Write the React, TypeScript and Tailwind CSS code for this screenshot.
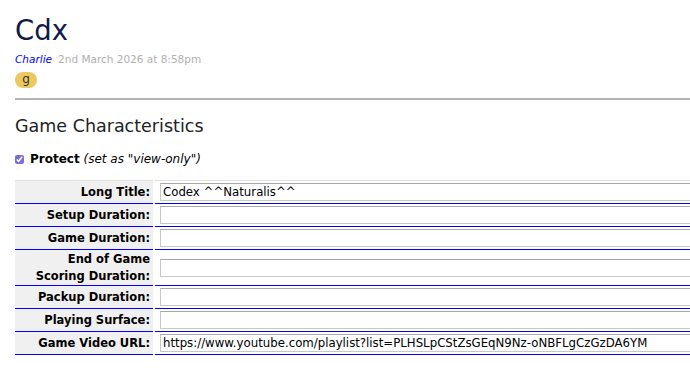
const rows: {label: string[], value: string, tall?: boolean}[] = [
  {label: ["Long Title:"], value: "Codex ^^Naturalis^^"},
  {label: ["Setup Duration:"], value: ""},
  {label: ["Game Duration:"], value: ""},
  {label: ["End of Game", "Scoring Duration:"], value: "", tall: true},
  {label: ["Packup Duration:"], value: ""},
  {label: ["Playing Surface:"], value: ""},
  {label: ["Game Video URL:"], value: "https://www.youtube.com/playlist?list=PLHSLpCStZsGEqN9Nz-oNBFLgCzGzDA6YM"},
]

export default function App() {
  return (
    <div className="w-[690px] h-[376px] overflow-hidden bg-white pl-[15px] pt-[10px] font-['DejaVu_Sans',sans-serif] text-[12px] text-black">
      <h1 className="text-[27.5px] leading-[40px] text-[#101a4a]">Cdx</h1>
      <div className="flex gap-[6px] text-[10.5px] leading-[14px] mt-[2px]">
        <span className="italic text-[#0000ee]">Charlie</span>
        <span className="text-[#b0b0b0]">2nd March 2026 at 8:58pm</span>
      </div>
      <div className="mt-[6px] w-[22px] h-[16px] rounded-full bg-[#ecc95f] flex items-center justify-center text-[12px] leading-none text-[#333] pb-[2px]">g</div>
      <div className="mt-[10px] w-[700px] border-t-2 border-[#b4b4b4]"></div>
      <h2 className="mt-[15px] text-[17.5px] leading-[22px] text-[#222]">Game Characteristics</h2>
      <div className="mt-[14px] flex items-center gap-[6px] leading-[16px]">
        <input type="checkbox" defaultChecked className="w-[9px] h-[9px] m-0 accent-[#7b6fd6]" />
        <span><b>Protect</b> <i>(set as "view-only")</i></span>
      </div>
      <table className="mt-[13px] w-[700px] border-collapse border-t border-[#e0e0e0]">
        <tbody>
          {rows.map((r, i) => (
            <tr key={i} className="border-b border-[#0000ff]">
              <td className={`w-[139px] p-0 bg-[#f0f0f0] text-right font-bold text-[11.5px] pr-[3px] border-r-2 border-white ${r.tall ? "h-[36px] leading-[17px]" : "h-[22px] leading-[16px]"}`}>
                {r.label.map((l, j) => <div key={j}>{l}</div>)}
              </td>
              <td className="pl-[5px] py-[2px]">
                <div className="h-[18px] border border-[#c8c8c8] border-t-[#a8a8a8] pl-[2px] leading-[16px] text-[11.75px] whitespace-nowrap">{r.value}</div>
              </td>
            </tr>
          ))}
        </tbody>
      </table>
    </div>
  )
}
